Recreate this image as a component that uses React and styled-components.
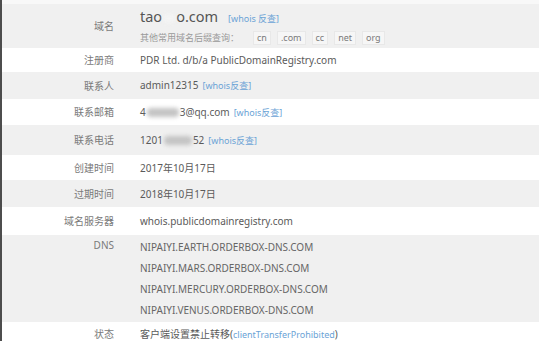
import React from "react";
import styled, { createGlobalStyle } from "styled-components";

const GlobalStyle = createGlobalStyle`
  html, body {
    margin: 0;
    padding: 0;
    background: #ffffff;
  }
  body {
    font-family: "Noto Sans", "Noto Sans CJK SC", sans-serif;
  }
`;

const rows = [
  { id: "registrar", label: "注册商", h: 24, value: "PDR Ltd. d/b/a PublicDomainRegistry.com" },
  { id: "contact", label: "联系人", h: 27, value: "admin12315", link: true },
  { id: "mail", label: "联系邮箱", h: 26, value: "4", blur: 32, tail: "3@qq.com", link: true },
  { id: "phone", label: "联系电话", h: 30, value: "1201", blur: 28, tail: "52", link: true },
  { id: "created", label: "创建时间", h: 25, value: "2017年10月17日" },
  { id: "expires", label: "过期时间", h: 27, value: "2018年10月17日" },
  { id: "server", label: "域名服务器", h: 28, value: "whois.publicdomainregistry.com" },
];

const dns = [
  "NIPAIYI.EARTH.ORDERBOX-DNS.COM",
  "NIPAIYI.MARS.ORDERBOX-DNS.COM",
  "NIPAIYI.MERCURY.ORDERBOX-DNS.COM",
  "NIPAIYI.VENUS.ORDERBOX-DNS.COM",
];

const suffixes = ["cn", ".com", "cc", "net", "org"];

const App = () => {
  let striped = false;
  return (
    <>
      <GlobalStyle />
      <Page>
        <TopStrip />
        <Row $gray $h={44}>
          <Label>域名</Label>
          <Value>
            <DomainLine>
              tao<Blur $w={12} $light />o.com<WhoisLink $gap={10}>[whois 反查]</WhoisLink>
            </DomainLine>
            <SuffixLine>
              <Hint>其他常用域名后缀查询：</Hint>
              {suffixes.map((s) => (
                <Suffix key={s}>{s}</Suffix>
              ))}
            </SuffixLine>
          </Value>
        </Row>
        {rows.map((r) => {
          striped = !striped;
          return (
            <Row key={r.id} $gray={!striped} $h={r.h}>
              <Label>{r.label}</Label>
              <Value>
                {r.value}
                {r.blur && <Blur $w={r.blur} />}
                {r.tail}
                {r.link && <WhoisLink $gap={4}>[whois反查]</WhoisLink>}
              </Value>
            </Row>
          );
        })}
        <Row $gray $h={87} $top>
          <Label>DNS</Label>
          <DnsList>
            {dns.map((d) => (
              <DnsItem key={d}>{d}</DnsItem>
            ))}
          </DnsList>
        </Row>
        <Row $h={24}>
          <Label>状态</Label>
          <Value>
            客户端设置禁止转移(<WhoisLink>clientTransferProhibited</WhoisLink>)
          </Value>
        </Row>
      </Page>
    </>
  );
};

export default App;

const Page = styled.div`
  width: 539px;
  height: 341px;
  overflow: hidden;
  border-left: 2px solid #4d4d4d;
  box-sizing: border-box;
  background: #ffffff;
`;

const TopStrip = styled.div`
  height: 4px;
  background: #f8f8f8;
`;

const Row = styled.div`
  display: grid;
  grid-template-columns: 112px 1fr;
  column-gap: 26px;
  align-items: ${(p) => (p.$top ? "start" : "center")};
  height: ${(p) => p.$h}px;
  box-sizing: border-box;
  padding-top: ${(p) => (p.$top ? "2px" : "0")};
  background: ${(p) => (p.$gray ? "#f0f0f0" : "#ffffff")};
`;

const Label = styled.div`
  text-align: right;
  font-size: 10px;
  color: #7a7a7a;
  line-height: 16px;
`;

const Value = styled.div`
  font-size: 10px;
  color: #5a5a5a;
  line-height: 16px;
  white-space: nowrap;
`;

const DomainLine = styled.div`
  font-size: 14.5px;
  line-height: 20px;
  color: #555555;
`;

const SuffixLine = styled.div`
  display: flex;
  align-items: center;
  gap: 6px;
  margin-top: 1px;
  font-size: 9px;
  color: #8a8a8a;
`;

const Hint = styled.span`
  margin-right: 8px;
  color: #9a9a9a;
`;

const Suffix = styled.span`
  padding: 0 3px;
  border: 1px solid #e8e8e8;
  background: #f6f6f6;
  color: #7a7a7a;
  line-height: 12px;
`;

const WhoisLink = styled.span`
  margin-left: ${(p) => p.$gap || 0}px;
  font-size: 9px;
  color: #6ba3d6;
`;

const Blur = styled.span`
  display: inline-block;
  width: ${(p) => p.$w}px;
  height: 9px;
  margin: 0 1px;
  vertical-align: middle;
  border-radius: 4px;
  background: ${(p) => (p.$light ? "#f4f4f4" : "#c4c4c4")};
  filter: blur(2px);
`;

const DnsList = styled.div`
  display: flex;
  flex-direction: column;
`;

const DnsItem = styled.div`
  font-size: 10px;
  color: #666666;
  line-height: 21px;
`;
